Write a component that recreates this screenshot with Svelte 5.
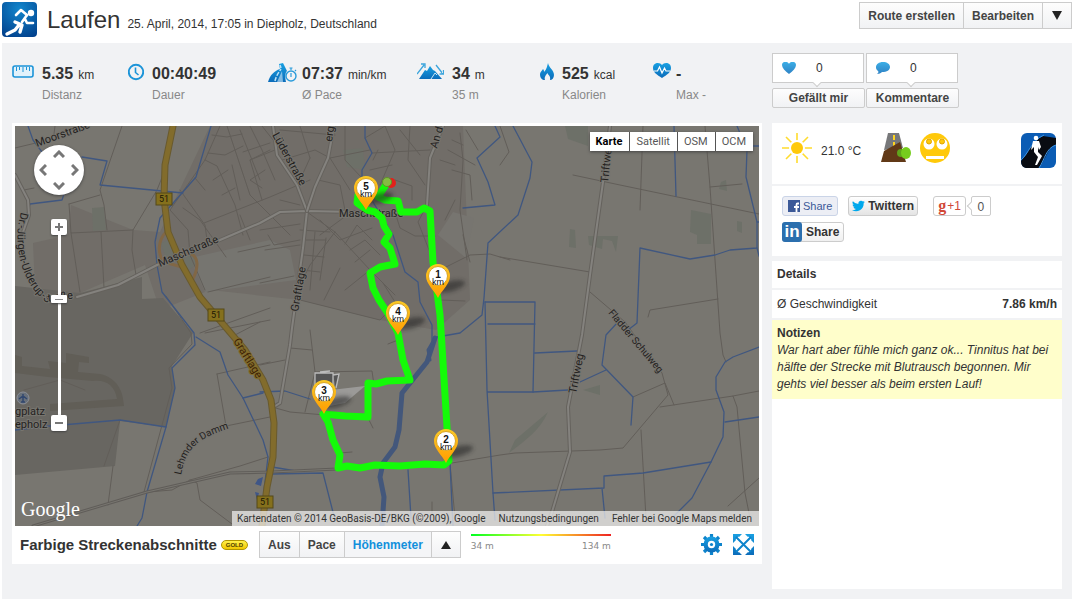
<script>
    const mapTypes = ['Karte', 'Satellit', 'OSM', 'OCM'];
    const colorModes = ['Aus', 'Pace', 'Höhenmeter'];

    let mapType = $state('Karte');
    let colorMode = $state('Höhenmeter');
    let zoom = $state(13);

    // km markers, x/y is the tip of the pin
    const pins = [
        { km: 5, x: 366, y: 210 },
        { km: 1, x: 438, y: 298 },
        { km: 4, x: 398, y: 335 },
        { km: 3, x: 324, y: 414 },
        { km: 2, x: 446, y: 463 },
    ];

    const shields = [
        { x: 164, y: 199 },
        { x: 216, y: 315 },
        { x: 265, y: 502 },
    ];

    const route = 'M387 183L378 197L385 200L398 201L401 212L417 212L424 208L430 211L433 262L440 315L441 330L447 427L449 461L444 465L425 464L400 466L375 465L360 468L347 466L338 468L340 455L333 440L328 422L323 414L345 416L368 417L368 383L376 384L387 381L410 380L403 360L398 333L387 312L379 300L373 288L370 273L380 267L395 264L390 248L384 242L389 234L384 226L382 218L375 212L367 210L357 203L358 195';

    const water = [
        'M28 126L33 140L42 152',
        'M82 157L107 161L100 185L183 193',
        'M30 204L62 200L64 194',
        'M211 126L196 177L160 218L155 242L157 265L162 292L194 333L195 345L172 368L175 388L166 427L147 492L142 518L137 526',
        'M196 337L220 352L228 375L243 398L263 440L268 457L264 490',
        'M243 398L263 393',
        'M15 430L50 426L120 420L166 427',
        'M30 204L23 228',
        'M365 126L365 138L372 153L362 170L362 178',
        'M373 202L393 235L405 272L418 282L420 302L432 325L432 340',
        'M495 126L500 137L477 158L488 182L495 205L463 208',
        'M513 126L532 162L530 178L518 215L488 243L484 298L482 315L460 333L437 337',
        'M485 302L535 302L533 392M488 324L535 324M535 353L577 351',
        'M485 302L487 390L493 493L495 520M487 392L533 392L568 390',
        'M674 126L676 196',
        'M737 126L747 150L746 177L757 222L757 248L730 250L715 255L690 259L640 248L637 323L628 330',
        'M617 323L606 335L602 365L633 397L631 425M606 370L580 382',
        'M759 347L733 357L725 362L716 377L716 390L724 412L723 437L711 462L692 498L673 517',
        'M725 422L759 417M711 462L643 473L604 476L604 488L493 493M602 488L605 518',
        'M272 467L296 471M272 474L323 473L335 520M408 470L411 518M450 463L453 526',
        'M260 392L285 391L310 399',
        'M746 146L759 146M757 222L759 222M757 248L759 256',
    ];

    const streets = [
        'M15 148L40 142M122 126L100 190L104 205L107 230M69 204L100 195M69 204L71 233L133 230L157 190L165 170M71 233L80 292M101 232L104 288M133 230L132 250L136 275M55 126L54 134M24 190L34 188',
        'M220 126L205 160L170 210M212 135L227 137L242 134M227 126L250 195L290 235M205 160L217 166L235 205L243 235M208 153L225 155L243 146M204 223L270 197L310 180M240 130L260 180M250 126L262 150L275 180M180 190L205 225L207 240M170 210L188 230L190 255M195 178L205 190M213 180L228 170M222 195L235 188M183 208L200 220L226 257M238 252L270 245M243 152L270 143M262 126L285 155M208 292L270 277M205 333L270 320M190 255L205 290',
        'M280 130L335 135M275 150L250 160L262 200M282 160L315 150L330 158L370 150M300 126L310 158M310 158L300 180M330 158L350 190M318 180L340 185L345 210M345 126L345 160L362 178M365 138L385 126M372 153L430 150M385 126L395 150L380 185M400 130L420 155M410 126L408 160L425 185M395 180L412 186L412 200M370 170L392 165M378 150L373 160',
        'M307 212L335 232L370 270L395 295M320 220L340 240L372 228M345 244L357 225L372 240M335 232L310 265L300 285M320 235L350 213M350 250L365 240L380 255M355 262L370 250M300 230L330 232M260 230L300 224M268 235L274 245L300 240M265 250L300 245M306 240L326 240M304 255L324 257M302 270L320 272M315 232L310 290M326 238L320 280M300 300L380 320L388 312M340 268L324 300M370 270L345 290M294 276L260 283M383 283L395 302M395 212L400 228L415 236L435 236',
        'M427 205L418 222L433 260L436 300M460 133L463 160L460 210L467 260M448 150L475 165M455 165L440 160M466 130L478 150M463 145L452 140M463 235L470 262M440 270L470 255L490 254L510 260M440 300L465 301M452 170L470 175L472 200M455 200L445 220',
        'M573 175L620 185L759 214M643 126L640 210M705 126L710 187L720 333L723 355L726 362M710 187L742 184M648 317L650 310L718 299',
        'M500 257L590 272M590 292L625 322L662 373L668 395L623 448L600 450L515 453L500 455L446 464L433 462M660 407L733 396L737 407L745 493L750 518M733 396L759 391M759 478L728 506M641 430L646 518M633 397L665 383L674 405M450 463L455 518',
        'M272 407L290 412L325 415M310 330L315 372L305 412M260 365L285 360M290 348L312 350M368 418L373 428M340 453L352 452M315 372L372 371L374 385M388 344L398 340M432 502L432 518M500 126L509 152L500 165',
        'M217 374L270 362M217 374L226 426L270 417M148 492L172 490L190 480L240 466L268 457M190 480L197 483L200 500L232 524M120 420L104 466M113 466L108 505M24 390L60 380L85 390M235 335L260 322',
        'M200 333L270 308M232 165L240 200M250 160L270 150M280 200L300 205M240 215L250 240M265 170L250 180L262 188',
        'M166 296L191 333L192 344L169 368L172 388L144 492',
    ];

    const roads = [
        'M15 175L28 200L29 215L22 235',
        'M77 297L118 285L157 265L220 240L260 223L280 212L307 211L403 213',
        'M273 126L277 155L297 185L307 211L303 248L292 328L290 345L280 403L272 408',
        'M334 126L328 158L315 187L307 211',
        'M443 126L430 158L427 205',
        'M610 126L603 182L590 275L582 335L568 407L570 452L552 512L547 526',
    ];

    const railway = 'M33 526L147 492L230 473L272 472L337 469';
</script>

{#snippet stat(value, unit, label)}
    <div class="stat-text">
        <div><strong>{value}</strong>{#if unit}<span class="unit">{unit}</span>{/if}</div>
        <div class="stat-label">{label}</div>
    </div>
{/snippet}

<svg class="defs" width="0" height="0" aria-hidden="true">
    <defs>
        <linearGradient id="blue" x1="0" y1="0" x2="0" y2="1">
            <stop offset="0" stop-color="#19a0e2" />
            <stop offset="1" stop-color="#0b6cba" />
        </linearGradient>
        <linearGradient id="pin" x1="0" y1="0" x2="0" y2="1">
            <stop offset="0" stop-color="#fbc926" />
            <stop offset="1" stop-color="#ff9c00" />
        </linearGradient>
        <radialGradient id="logo" cx=".5" cy=".2" r=".9">
            <stop offset="0" stop-color="#1286cc" />
            <stop offset="1" stop-color="#013f8b" />
        </radialGradient>
        <filter id="soft" x="-30%" y="-50%" width="160%" height="200%">
            <feGaussianBlur stdDeviation="2" />
        </filter>
    </defs>
</svg>

<header class="page-head">
    <svg width="35" height="35" viewBox="0 0 35 35">
        <rect width="35" height="35" rx="4" fill="url(#logo)" />
        <circle cx="29" cy="11" r="3.2" fill="#fff" />
        <path d="M14 13L19 8L25 13" fill="none" stroke="#fff" stroke-width="2.600" stroke-linecap="round" stroke-linejoin="round" />
        <path d="M25 13L20 20M31 21L25 21L23 17" fill="none" stroke="#fff" stroke-width="2.600" stroke-linecap="round" stroke-linejoin="round" />
        <path d="M13 20L20 23L18 30M17 23L13 28L5 32" fill="none" stroke="#fff" stroke-width="3.400" stroke-linecap="round" stroke-linejoin="round" />
    </svg>
    <h1>Laufen</h1>
    <span class="date">25. April, 2014, 17:05 in Diepholz, Deutschland</span>
    <div class="btn-group head-actions">
        <button>Route erstellen</button>
        <button>Bearbeiten</button>
        <button class="arrow" aria-label="Mehr"><svg width="10" height="9"><path d="M0 0H10L5 9Z" fill="#222" /></svg></button>
    </div>
</header>

<main class="panel">
    <section class="left">
        <div class="stats">
            <div class="stat">
                <svg width="22" height="16" viewBox="0 0 22 16">
                    <rect x="1" y="3" width="20" height="11" rx="2" fill="#e2f2fb" stroke="#1c94d8" stroke-width="1.6" />
                    <path d="M4.500 4V8M7.500 4V7M11 4V9M14.500 4V7M17.500 4V8" stroke="#1c94d8" />
                </svg>
                {@render stat('5.35', 'km', 'Distanz')}
            </div>
            <div class="stat">
                <svg width="16" height="18" viewBox="0 0 16 18">
                    <circle cx="8" cy="9" r="7.200" fill="none" stroke="#1c94d8" stroke-width="1.900" />
                    <path d="M7.500 4.500V9.500L10.500 12" fill="none" stroke="#1c94d8" stroke-width="1.600" />
                </svg>
                {@render stat('00:40:49', '', 'Dauer')}
            </div>
            <div class="stat tight">
                <svg width="29" height="20" viewBox="0 0 29 20">
                    <path d="M0 19C2 12 6 8 12 6L11 1L15 0L19 8C17 10 17 14 18 19Z" fill="url(#blue)" />
                    <path d="M7 18C8 13 11 9 13 6M13 5L12 2" stroke="#bfe3f6" stroke-width="1.500" fill="none" stroke-dasharray="4 1.500" />
                    <path d="M9 19L14 8L15 19Z" fill="#d2ebf8" opacity=".6" />
                    <circle cx="23" cy="13" r="5" fill="#f1f2f4" stroke="#2a9bda" stroke-width="1.400" />
                    <path d="M23 7V5M21.500 5H24.500M23 10V14M27 8L28 7" stroke="#2a9bda" stroke-width="1.200" />
                </svg>
                {@render stat('07:37', 'min/km', 'Ø Pace')}
            </div>
            <div class="stat">
                <svg width="27" height="20" viewBox="0 0 27 20">
                    <path d="M2 16L8 7L10 8L13 3L16 7L18 8L25 16Z" fill="url(#blue)" />
                    <path d="M14 16L18 10L20 12" fill="none" stroke="#c9e6f6" />
                    <path d="M0 11L7 2M4 1H8V5M19 2L26 11M22.500 11H26.500V7" fill="none" stroke="#3da5dc" stroke-width="1.300" />
                </svg>
                {@render stat('34', 'm', '35 m')}
            </div>
            <div class="stat">
                <svg width="14" height="20" viewBox="0 0 14 20">
                    <path d="M8 0C9 5 14 7 14 12C14 15 12 17 10 17C11 13 8 12 7.500 10C6 12 4 14 5 17C2 17 0 15 0 11C0 9 2 8 3 6C4 7 4 8 4 9C7 6 7 3 8 0Z" fill="url(#blue)" />
                </svg>
                {@render stat('525', 'kcal', 'Kalorien')}
            </div>
            <div class="stat tight">
                <svg width="18" height="18" viewBox="0 0 18 18">
                    <path d="M9 15C4 12 0 9 0 5C0 -1 7 -1 9 2C11 -1 18 -1 18 5C18 9 14 12 9 15Z" fill="url(#blue)" />
                    <path d="M1 8H4.500L6.500 4L9 10L11.500 5L13 8H17" fill="none" stroke="#fff" stroke-width="1.200" />
                </svg>
                {@render stat('-', '', 'Max -')}
            </div>
        </div>

        <div class="map-card">
            <div class="map">
                <svg class="map-canvas" viewBox="15 126 744 400" preserveAspectRatio="xMidYMid slice" role="img" aria-label="Streckenkarte">
                    <rect x="15" y="126" width="744" height="400" fill="#787670" />
                    <!-- built-up areas -->
                    <path d="M71 205L133 230L160 232L170 210L210 126H463L470 300L436 330L380 320L300 300L210 290L160 310L145 265L80 293L35 290L33 243L68 235Z" fill="#716d68" />
                    <path d="M190 258L270 240L290 250L296 280L205 292Z" fill="#767570" />
                    <path d="M453 212L474 218L466 258L438 235Z" fill="#777570" />
                    <path d="M15 286L80 293L142 277L142 299L163 298L193 333L172 366L175 388L166 427L120 421L115 466L15 475Z" fill="#686661" />
                    <path d="M15 355L22 357V366L50 369L48 361L66 363V353L89 357V363L79 362L78 372L100 374C117 378 123 390 124 406L50 411V404L117 399C115 385 105 379 93 381L48 377L15 373Z" fill="#615e57" />
                    <path d="M161 243L170 239L180 262L165 256ZM184 257L194 252L196 265L187 271ZM92 208L104 207L106 230L93 231ZM565 126H588V146L568 139ZM691 210L711 214V244H697V235L690 232ZM570 229L575 230L576 248L569 247ZM588 236L618 236L616 252L612 241L603 239L602 249L589 245ZM515 440L548 412C540 430 526 440 509 453ZM583 390L600 385V395ZM343 150L363 148L365 170L347 167ZM721 182L726 180L727 191L719 189ZM737 221L742 222V233L737 231Z" fill="#6d7068" />
                    {#each streets as d}
                        <path class="street" {d} />
                    {/each}
                    {#each water as d}
                        <path class="water" {d} />
                    {/each}
                    <path class="river" d="M435 338L427 362L402 393L399 430L395 447L383 463L380 477L384 497L382 526" />
                    <path class="river thin" d="M435 338L428 350L430 360" />
                    <path d="M258 479L263 477L261 486L255 484ZM255 492L259 493L257 500Z" fill="#3f5687" />
                    <path class="rail-edge" d={railway} />
                    <path class="rail" d={railway} />
                    {#each roads as d}
                        <path class="road-edge" {d} />
                        <path class="road" {d} />
                    {/each}
                    <path d="M166 232C158 240 157 254 164 262L185 268M182 252C202 252 199 270 190 284" fill="none" stroke="#816746" stroke-width="3" />
                    <path class="highway-edge" d="M173 126L165 165L164 198L168 232L182 265L200 297L217 317L245 350L263 380L271 400L274 423L273 457L267 487L262 526" />
                    <path class="highway" d="M173 126L165 165L164 198L168 232L182 265L200 297L217 317L245 350L263 380L271 400L274 423L273 457L267 487L262 526" />

                    <path id="dr-weg" d="M21 212C12 242 20 282 46 302L110 294" fill="none" />
                    <path id="lehmder" d="M181 475C186 450 194 438 240 425" fill="none" />
                    <g class="street-names">
                        <text transform="translate(37 147) rotate(-20)">Moorstraße</text>
                        <text transform="translate(160 267) rotate(-23)">Maschstraße</text>
                        <text><textPath href="#dr-weg">Dr.-Jürgen-Ulderup-Straße</textPath></text>
                        <text transform="translate(272 135) rotate(61)">Lüderstraße</text>
                        <text transform="translate(332 142) rotate(-82)">erg</text>
                        <text transform="translate(437 149) rotate(-74)">An d</text>
                        <text transform="translate(298 312) rotate(-80)">Graftlage</text>
                        <text transform="translate(233 341) rotate(58)" class="on-highway">Graftlage</text>
                        <text transform="translate(608 183) rotate(-84)">Triftweg</text>
                        <text transform="translate(576 394) rotate(-79)">Triftweg</text>
                        <text class="small" transform="translate(608 313) rotate(50)">Fladder Schulweg</text>
                        <text class="small"><textPath href="#lehmder">Lehmder Damm</textPath></text>
                        <text x="339" y="217">Maschstraße</text>
                        <text x="15" y="415">gplatz</text>
                        <text x="15" y="428">epholz</text>
                    </g>
                    <circle cx="23" cy="398" r="6" fill="#68707a" stroke="#8b8f98" />
                    <path d="M23 394V402M19 399L23 396L27 399M21 402H25" stroke="#31476f" stroke-width="1.500" fill="none" />

                    {#each shields as s}
                        <g transform="translate({s.x} {s.y})">
                            <rect x="-8" y="-6" width="16" height="12" fill="#85701c" stroke="#544818" />
                            <text class="shield" y="3">51</text>
                        </g>
                    {/each}

                    <path class="route" d={route} />
                    <circle cx="391" cy="183" r="5" fill="#e2211c" />
                    <circle cx="387" cy="182" r="4.500" fill="#86bb42" stroke="#5e9427" />
                    <path d="M331 390L365 386L345 403L330 406Z" fill="#aaa" opacity=".7" />
                    <path d="M315 373H333V392H315ZM333 375L339 374L336 388M320 372L330 371" fill="#555" stroke="#bbb" stroke-width="1.300" />
                    {#each pins as pin}
                        <g transform="translate({pin.x} {pin.y})">
                            <ellipse cx="15" cy="-8" rx="15" ry="5" transform="rotate(-15)" fill="#222" opacity=".55" filter="url(#soft)" />
                            <path d="M0 0C-4 -8 -12 -14 -12 -22A12 12 0 0 1 12 -22C12 -14 4 -8 0 0Z" fill="url(#pin)" />
                            <circle cy="-22" r="9.500" fill="#fff" stroke="#d9a526" />
                            <text class="pin-text" y="-20">{pin.km}</text>
                            <text class="pin-text small" y="-13">km</text>
                        </g>
                    {/each}
                    <text class="google" x="21" y="516">Google</text>
                </svg>

                <div class="map-nav">
                    <div class="pan">
                        <button class="up" aria-label="Nach oben"><svg width="12" height="8"><path d="M1 7L6 2L11 7" /></svg></button>
                        <button class="west" aria-label="Nach links"><svg width="8" height="12"><path d="M7 1L2 6L7 11" /></svg></button>
                        <button class="east" aria-label="Nach rechts"><svg width="8" height="12"><path d="M1 1L6 6L1 11" /></svg></button>
                        <button class="down" aria-label="Nach unten"><svg width="12" height="8"><path d="M1 1L6 6L11 1" /></svg></button>
                    </div>
                    <button class="zoom-btn" aria-label="Vergrößern" onclick={() => zoom++}><svg width="8" height="8"><path d="M0 4H8M4 0V8" /></svg></button>
                    <input type="range" min="0" max="20" bind:value={zoom} aria-label="Zoom">
                    <button class="zoom-btn" aria-label="Verkleinern" onclick={() => zoom--}><svg width="8" height="8"><path d="M0 4H8" /></svg></button>
                </div>

                <div class="map-types">
                    {#each mapTypes as type}
                        <button class:active={mapType === type} onclick={() => (mapType = type)}>{type}</button>
                    {/each}
                </div>

                <div class="attribution">
                    <span>Kartendaten © 2014 GeoBasis-DE/BKG (©2009), Google</span>
                    <a href="#terms">Nutzungsbedingungen</a>
                    <a href="#report">Fehler bei Google Maps melden</a>
                </div>
            </div>

            <div class="toolbar">
                <h2>Farbige Streckenabschnitte</h2>
                <span class="gold">GOLD</span>
                <div class="btn-group">
                    {#each colorModes as mode}
                        <button class:active={colorMode === mode} onclick={() => (colorMode = mode)}>{mode}</button>
                    {/each}
                    <button class="arrow" aria-label="Aufklappen"><svg width="10" height="8"><path d="M0 8H10L5 0Z" fill="#222" /></svg></button>
                </div>
                <div class="legend">
                    <div class="legend-bar"></div>
                    <div class="legend-values"><span>34 m</span><span>134 m</span></div>
                </div>
                <div class="tools">
                    <button aria-label="Einstellungen">
                        <svg width="21" height="21" viewBox="0 0 21 21">
                            <path d="M10.500 0V21M0 10.500H21M3 3L18 18M18 3L3 18" stroke="#0d84cc" stroke-width="3.200" />
                            <circle cx="10.500" cy="10.500" r="8" fill="url(#blue)" />
                            <circle cx="10.500" cy="10.500" r="3.700" fill="#fff" />
                            <circle cx="10.500" cy="10.500" r="1.600" fill="#0d84cc" />
                        </svg>
                    </button>
                    <button aria-label="Vollbild">
                        <svg width="21" height="21" viewBox="0 0 21 21">
                            <path d="M0 0H9L0 9ZM21 0V9L12 0ZM0 21V12L9 21ZM21 21H12L21 12Z" fill="url(#blue)" />
                            <path d="M4 4L17 17M17 4L4 17" stroke="#fff" stroke-width="4" />
                            <path d="M3 3L18 18M18 3L3 18" stroke="#0d84cc" stroke-width="2" />
                        </svg>
                    </button>
                </div>
            </div>
        </div>
    </section>

    <aside class="right">
        <div class="social">
            <div>
                <div class="count">
                    <svg width="14" height="12" viewBox="0 0 14 12"><path d="M7 12C3 9 0 6 0 3C0 -1 6 -1 7 2C8 -1 14 -1 14 3C14 6 11 9 7 12Z" fill="url(#blue)" opacity=".85" /></svg>
                    <span>0</span>
                </div>
                <button>Gefällt mir</button>
            </div>
            <div>
                <div class="count">
                    <svg width="14" height="12" viewBox="0 0 14 12"><path d="M7 0C11 0 14 2 14 5C14 8 11 10 6 10C5 11 3 12 1 12C2 11 3 10 2 9C-2 6 0 0 7 0Z" fill="url(#blue)" opacity=".85" /></svg>
                    <span>0</span>
                </div>
                <button>Kommentare</button>
            </div>
        </div>

        <div class="card conditions">
            <svg width="30" height="30" viewBox="0 0 30 30">
                <path d="M15 0V30M0 15H30M4 4L26 26M26 4L4 26" stroke="#ffdc2e" stroke-width="1.600" />
                <circle cx="15" cy="15" r="8" fill="#fff" />
                <circle cx="15" cy="15" r="6" fill="#ffc90a" />
            </svg>
            <span class="temp">21.0 °C</span>
            <svg width="30" height="30" viewBox="0 0 30 30">
                <path d="M7 0H18L22 15L3 17Z" fill="#77787a" />
                <path d="M13 2V7M13 9V16" stroke="#ffd51f" stroke-width="2" />
                <path d="M0 29L3 18L19 9L25 29Z" fill="#613917" />
                <circle cx="20" cy="20" r="4" fill="#5fa51b" />
                <ellipse cx="25" cy="20" rx="5" ry="6" fill="#76cd1d" />
            </svg>
            <svg width="30" height="30" viewBox="0 0 30 30">
                <circle cx="15" cy="15" r="15" fill="#ffc90a" />
                <circle cx="9" cy="11" r="5.500" fill="#fff" />
                <circle cx="22" cy="11" r="5.500" fill="#fff" />
                <circle cx="9" cy="8.500" r="2.500" fill="#ffc90a" stroke="#e0a400" />
                <circle cx="22" cy="8.500" r="2.500" fill="#ffc90a" stroke="#e0a400" />
                <rect x="6" y="23" width="18" height="3" fill="#fff" />
            </svg>
            <svg class="app-icon" width="35" height="35" viewBox="0 0 35 35">
                <rect width="35" height="35" rx="6" fill="#0b5cb4" />
                <path d="M0 28C8 20 10 8 22 3L35 5V12C28 12 24 28 18 35H5Q0 34 0 28Z" fill="#090c12" />
                <path d="M0 27C8 20 10 8 23 2M18 35C24 26 25 15 35 12" fill="none" stroke="#3e94e4" />
                <circle cx="15" cy="5" r="2.300" fill="#fff" />
                <path d="M12 8L18 8L20 14L18 17L17 14L17 19L21 23L16 32L14 32L17 24L13 19L13 14L10 17Z" fill="#fff" />
            </svg>
        </div>

        <div class="card shares">
            <button class="fb"><svg width="12" height="12"><rect width="12" height="12" fill="#3b5998" /><path d="M11 3.500H9.500Q8.500 3.500 8.500 5V12M6 7H11" fill="none" stroke="#fff" stroke-width="1.800" /></svg>Share</button>
            <button class="tw"><svg width="13" height="12" viewBox="0 0 24 20"><path d="M24 2.400a10 10 0 0 1-2.800.8A5 5 0 0 0 23.300.5a10 10 0 0 1-3.100 1.200A5 5 0 0 0 11.800 6.200 14 14 0 0 1 1.700 1a5 5 0 0 0 1.500 6.600 5 5 0 0 1-2.200-.6 5 5 0 0 0 3.900 4.900 5 5 0 0 1-2.200 0 5 5 0 0 0 4.600 3.500A10 10 0 0 1 0 17.500 14 14 0 0 0 21.500 5z" fill="#00a8ec" /></svg>Twittern</button>
            <div class="gplus">
                <button><b>g</b>+1</button>
                <span class="bubble">0</span>
            </div>
            <button class="li"><span>in</span>Share</button>
        </div>

        <h3 class="card details-title">Details</h3>
        <dl class="card detail"><dt>Ø Geschwindigkeit</dt><dd>7.86 km/h</dd></dl>
        <div class="notes">
            <h3>Notizen</h3>
            <p>War hart aber fühle mich ganz ok... Tinnitus hat bei hälfte der Strecke mit Blutrausch begonnen. Mir gehts viel besser als beim ersten Lauf!</p>
        </div>
        <div class="card filler"></div>
    </aside>
</main>

<style>
    :global(body) {
        background: #fff;
        color: #333;
        font-family: "Liberation Sans", Arial, sans-serif;
        font-size: 12px;
    }

    :global(#app) {
        display: flex;
        flex-direction: column;
        min-height: 100vh;
    }

    .defs {
        position: absolute;
    }

    svg {
        display: block;
        flex-shrink: 0;
    }

    button {
        font: inherit;
        padding: 0;
        margin: 0;
        border: 0;
        background: none;
        color: inherit;
        cursor: pointer;
    }

    h1, h2, h3, p, dl, dd {
        margin: 0;
    }

    .page-head {
        display: flex;
        align-items: flex-start;
        height: 41px;
        padding: 2px 2px 0;
    }

    h1 {
        margin-left: 10px;
        font-size: 24px;
        font-weight: 400;
        line-height: 36px;
    }

    .date {
        margin-left: 7px;
        line-height: 44px;
    }

    .btn-group {
        display: flex;
        height: 27px;
        box-sizing: border-box;
        border: 1px solid #ccc;
    }

    .btn-group button {
        padding: 0 8px;
        border-left: 1px solid #ccc;
        background: linear-gradient(#fdfdfd, #f1f2f4);
        color: #444;
        font-weight: 700;
    }

    .btn-group button:first-child {
        border-left: 0;
    }

    .btn-group .arrow {
        padding: 0 9px;
    }

    .btn-group .active {
        background: #f4f5f7;
        color: #1290dc;
    }

    .head-actions {
        margin-left: auto;
    }

    .panel {
        display: flex;
        flex: 1;
        gap: 10px;
        margin: 0 2px 3px;
        padding: 10px;
        background: #f1f2f4;
    }

    .left {
        flex: 1;
        min-width: 0;
    }

    .stats {
        display: grid;
        grid-template-columns: 116fr 140fr 149fr 123fr 113fr 109fr;
        height: 60px;
        padding-top: 10px;
    }

    .stat {
        display: flex;
        gap: 8px;
        white-space: nowrap;
    }

    .stat.tight {
        gap: 5px;
    }

    .stat-text {
        padding-top: 1px;
        line-height: 20px;
    }

    .stat strong {
        font-size: 16px;
    }

    .unit {
        margin-left: 5px;
    }

    .stat-label {
        color: #888;
    }

    .map-card {
        padding: 3px;
        background: #fff;
    }

    .map {
        position: relative;
        overflow: hidden;
    }

    .map-canvas {
        width: 100%;
        height: 400px;
        font-family: Roboto, Arial, sans-serif;
    }

    .street,
    .water,
    .road,
    .road-edge,
    .rail,
    .rail-edge,
    .river,
    .highway,
    .highway-edge,
    .route {
        fill: none;
        stroke-linejoin: round;
        stroke-linecap: round;
    }

    .street {
        stroke: #625e59;
    }

    .water {
        stroke: #405780;
        stroke-width: 1.3;
    }

    .river {
        stroke: #43577b;
        stroke-width: 5;
    }

    .river.thin {
        stroke-width: 3;
    }

    .rail-edge {
        stroke: #605d59;
        stroke-width: 3;
    }

    .rail {
        stroke: #787670;
        stroke-width: 1;
    }

    .road-edge {
        stroke: #65625d;
        stroke-width: 4;
    }

    .road {
        stroke: #84827e;
        stroke-width: 2;
    }

    .highway-edge {
        stroke: #695a2e;
        stroke-width: 7;
    }

    .highway {
        stroke: #826c2c;
        stroke-width: 5;
    }

    .route {
        stroke: #14fb08;
        stroke-width: 7;
    }

    .street-names text {
        fill: #24221f;
        font-size: 11px;
        paint-order: stroke;
        stroke: #77756f;
        stroke-width: 2px;
    }

    .street-names .small {
        font-size: 10px;
    }

    .street-names .on-highway {
        fill: #3e2305;
        stroke: #826c2c;
    }

    .shield {
        fill: #1c1804;
        font-size: 9px;
        text-anchor: middle;
    }

    .pin-text {
        fill: #111;
        font-family: "Liberation Sans", Arial, sans-serif;
        font-size: 10px;
        font-weight: 700;
        text-anchor: middle;
    }

    .pin-text.small {
        font-size: 9px;
        font-weight: 400;
    }

    .google {
        fill: #fff;
        font-family: "Liberation Serif", serif;
        font-size: 20px;
    }

    .map-nav {
        position: absolute;
        top: 19px;
        left: 19px;
        display: flex;
        flex-direction: column;
        align-items: center;
    }

    .map-nav path {
        fill: none;
        stroke: #777;
        stroke-width: 2;
    }

    .pan {
        display: grid;
        grid-template: 16px 16px 16px / 16px 16px 16px;
        place-items: center;
        padding: 1px;
        margin-bottom: 24px;
        border-radius: 50%;
        background: #fff;
        box-shadow: 0 1px 3px #444;
    }

    .pan path {
        stroke-width: 3;
    }

    .up {
        grid-area: 1 / 2;
    }

    .west {
        grid-area: 2 / 1;
    }

    .east {
        grid-area: 2 / 3;
    }

    .down {
        grid-area: 3 / 2;
    }

    .zoom-btn {
        display: grid;
        place-items: center;
        width: 16px;
        height: 16px;
        border-radius: 2px;
        background: #fff;
        box-shadow: 0 1px 2px #444;
    }

    .map-nav input {
        appearance: none;
        writing-mode: vertical-lr;
        direction: rtl;
        width: 20px;
        height: 180px;
        margin: 0;
        background: linear-gradient(#fff, #fff) center / 3px 100% no-repeat;
    }

    .map-nav input::-webkit-slider-thumb {
        appearance: none;
        width: 16px;
        height: 8px;
        border-radius: 1px;
        background: linear-gradient(#888, #888) center / 8px 1px no-repeat #fff;
        box-shadow: 0 1px 2px #444;
    }

    .map-types {
        position: absolute;
        top: 6px;
        right: 6px;
        display: flex;
        gap: 1px;
        background: #555;
        box-shadow: 0 1px 3px #444;
    }

    .map-types button {
        height: 19px;
        padding: 0 7px 0 6px;
        background: #fff;
        color: #565656;
        font: 11px Roboto, Arial, sans-serif;
    }

    .map-types .active {
        color: #000;
        font-weight: 700;
    }

    .attribution {
        position: absolute;
        right: 0;
        bottom: 0;
        display: flex;
        gap: 13px;
        padding: 0 7px 0 5px;
        background: rgba(245, 245, 245, .7);
        color: #333;
        font: 10px/15px Roboto, Arial, sans-serif;
        white-space: nowrap;
    }

    .attribution a {
        color: inherit;
        text-decoration: none;
    }

    .toolbar {
        display: flex;
        align-items: center;
        height: 37px;
        padding: 0 5px;
        margin-bottom: -2px;
    }

    h2 {
        font-size: 15px;
        white-space: nowrap;
    }

    .gold {
        margin: 0 11px 0 4px;
        padding: 0 4px;
        border: 1px solid #b19600;
        border-radius: 5px;
        background: linear-gradient(#fff04a, #f1c700);
        color: #4c4000;
        font-size: 6px;
        font-weight: 700;
        line-height: 8px;
    }

    .legend {
        width: 140px;
        margin-left: 10px;
        color: #888;
        font: 9px/20px "DejaVu Sans", Verdana, sans-serif;
    }

    .legend-bar {
        height: 2px;
        background: linear-gradient(90deg, #0f2, #ff3 50%, #e22);
    }

    .legend-values {
        display: flex;
        justify-content: space-between;
    }

    .tools {
        display: flex;
        gap: 11px;
        margin-left: auto;
    }

    .right {
        display: flex;
        flex-direction: column;
        width: 290px;
    }

    .social {
        display: flex;
        gap: 1px;
        height: 70px;
    }

    .social > div {
        width: 93px;
    }

    .count {
        position: relative;
        display: flex;
        align-items: center;
        gap: 20px;
        box-sizing: border-box;
        width: 92px;
        height: 30px;
        margin-bottom: 5px;
        padding-left: 9px;
        border: 1px solid #ccc;
        background: #fff;
    }

    .count::after,
    .bubble::before {
        content: '';
        position: absolute;
        width: 5px;
        height: 5px;
        border: 1px solid #ccc;
        background: #fff;
        transform: rotate(45deg);
    }

    .count::after {
        bottom: -4px;
        left: 41px;
        border-width: 0 1px 1px 0;
    }

    .social button {
        width: 93px;
        height: 20px;
        border: 1px solid #ccc;
        border-radius: 2px;
        background: linear-gradient(#fdfdfd, #f1f2f4);
        color: #444;
        font-weight: 700;
    }

    .card {
        margin-bottom: 2px;
        background: #fff;
    }

    .conditions {
        display: flex;
        align-items: flex-start;
        gap: 9px;
        box-sizing: border-box;
        height: 61px;
        padding: 10px 6px 0 10px;
    }

    .temp {
        width: 51px;
        line-height: 36px;
    }

    .app-icon {
        margin-left: auto;
    }

    .shares {
        display: flex;
        flex-wrap: wrap;
        gap: 6px 10px;
        align-content: flex-start;
        box-sizing: border-box;
        height: 70px;
        margin-bottom: 5px;
        padding: 10px 50px 0 10px;
    }

    .shares button {
        display: flex;
        align-items: center;
        gap: 3px;
        box-sizing: border-box;
        height: 20px;
        padding: 0 3px;
        border: 1px solid #ccc;
        border-radius: 3px;
        background: linear-gradient(#fff, #e4e4e4);
        font-weight: 700;
    }

    .shares .fb {
        padding: 0 5px;
        border-color: #cad4e7;
        background: #eceef5;
        color: #3b5998;
        font-size: 11px;
        font-weight: 400;
    }

    .gplus {
        display: flex;
        gap: 5px;
        margin-left: 5px;
    }

    .shares .gplus button {
        gap: 1px;
        padding: 0 4px;
        background: #fff;
        color: #d14836;
        font-size: 12px;
        font-weight: 400;
    }

    .gplus b {
        font: 700 16px/16px "Liberation Serif", serif;
    }

    .bubble {
        position: relative;
        box-sizing: border-box;
        width: 20px;
        height: 20px;
        border: 1px solid #ccc;
        border-radius: 2px;
        color: #555;
        line-height: 20px;
        text-align: center;
    }

    .bubble::before {
        top: 6px;
        left: -4px;
        border-width: 0 0 1px 1px;
    }

    .shares .li {
        gap: 4px;
        padding: 0 4px 0 0;
        background: linear-gradient(#fff, #f0f0f0);
    }

    .li span {
        width: 20px;
        margin-left: -1px;
        border-radius: 3px;
        background: #2b6fae;
        color: #fff;
        font-size: 17px;
        line-height: 20px;
        text-align: center;
    }

    h3 {
        font-size: 12px;
    }

    .details-title {
        padding: 0 5px;
        line-height: 27px;
    }

    .detail {
        display: flex;
        justify-content: space-between;
        padding: 0 5px;
        line-height: 28px;
    }

    .detail dd {
        font-weight: 700;
    }

    .notes {
        padding: 4px 3px 6px 5px;
        background: #fffecb;
        line-height: 17px;
    }

    .notes h3 {
        line-height: 18px;
    }

    .notes p {
        font-style: italic;
    }

    .filler {
        flex: 1;
        margin: 0;
    }
</style>
